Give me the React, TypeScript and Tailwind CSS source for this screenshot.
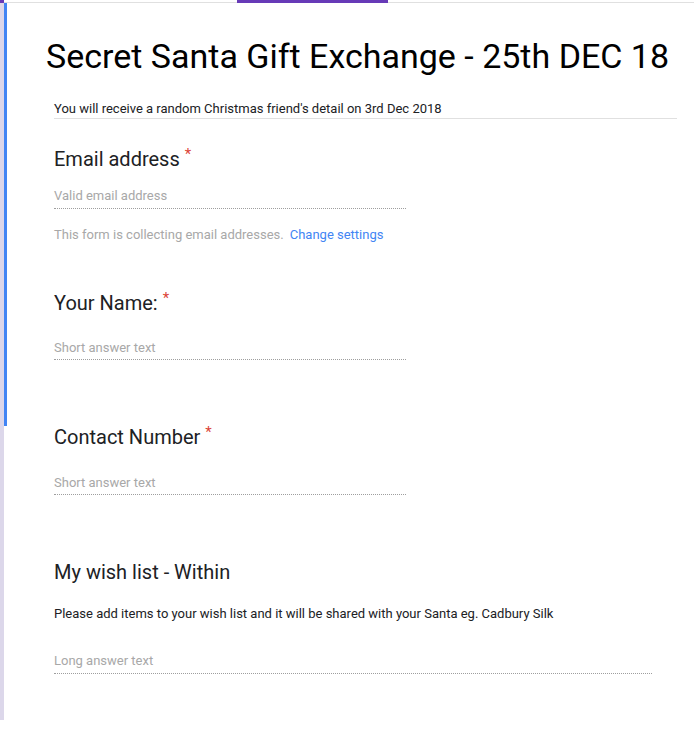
const QUESTIONS = [
  { title: "Your Name:", placeholder: "Short answer text", gap: "mt-[48px]", inner: "mt-[25px]", pb: "pb-[3px]" },
  { title: "Contact Number", placeholder: "Short answer text", gap: "mt-[65px]", inner: "mt-[26px]", pb: "pb-[3px]" },
] as const;

function Asterisk() {
  return (
    <span className="ml-[5px] inline-block align-top text-[15px] leading-[15px] text-[#db4437]">*</span>
  );
}

export default function App() {
  return (
    <div className="h-[749px] w-[694px] overflow-hidden bg-white font-['Roboto',sans-serif]">
      <div className="flex h-[720px]">
        <div className="flex w-[4px] flex-col bg-[#dcd7ea]">
          <div className="h-[3px] bg-[#673ab7]" />
        </div>

        <div className="flex flex-1 flex-col">
          <div className="flex h-[3px]">
            <div className="w-[233px] border-b border-[#e0e0e0]" />
            <div className="w-[151px] bg-[#673ab7]" />
            <div className="flex-1 border-b border-[#e0e0e0]" />
          </div>

          <div className="flex flex-1">
            <div className="h-[423px] w-[3px] bg-[#4285f4]" />

            <div className="flex flex-1 flex-col pr-[17px]">
              <h1 className="mt-[33px] whitespace-nowrap pl-[39px] text-[34px] leading-[40px] text-black">
                Secret Santa Gift Exchange - 25th DEC 18
              </h1>
              <p className="ml-[47px] mt-[25px] border-b border-[#e0e0e0] pb-[1px] text-[13px] leading-[16px] text-[#202124]">
                You will receive a random Christmas friend's detail on 3rd Dec 2018
              </p>

              <div className="ml-[47px] flex flex-col">
                <h2 className="mt-[28px] text-[20px] leading-[24px] text-[#202124]">
                  Email address
                  <Asterisk />
                </h2>
                <div className="mt-[17px] w-[352px] border-b border-dotted border-[#9e9e9e] pb-[4px] text-[13px] leading-[16px] text-[#a8a8a8]">
                  Valid email address
                </div>
                <p className="mt-[18px] text-[13px] leading-[16px] text-[#a8a8a8]">
                  This form is collecting email addresses.
                  <span className="ml-[6px] text-[#4285f4]">Change settings</span>
                </p>

                {QUESTIONS.map((q) => (
                  <div key={q.title} className="flex flex-col">
                    <h2 className={`${q.gap} text-[20px] leading-[24px] text-[#202124]`}>
                      {q.title}
                      <Asterisk />
                    </h2>
                    <div
                      className={`${q.inner} ${q.pb} w-[352px] border-b border-dotted border-[#9e9e9e] text-[13px] leading-[16px] text-[#a8a8a8]`}
                    >
                      {q.placeholder}
                    </div>
                  </div>
                ))}

                <h2 className="mt-[65px] text-[20px] leading-[24px] text-[#202124]">My wish list - Within</h2>
                <p className="mt-[22px] text-[13px] leading-[16px] text-[#202124]">
                  Please add items to your wish list and it will be shared with your Santa eg. Cadbury Silk
                </p>
                <div className="mt-[31px] w-[598px] border-b border-dotted border-[#9e9e9e] pb-[4px] text-[13px] leading-[16px] text-[#a8a8a8]">
                  Long answer text
                </div>
              </div>
            </div>
          </div>
        </div>
      </div>
    </div>
  );
}
